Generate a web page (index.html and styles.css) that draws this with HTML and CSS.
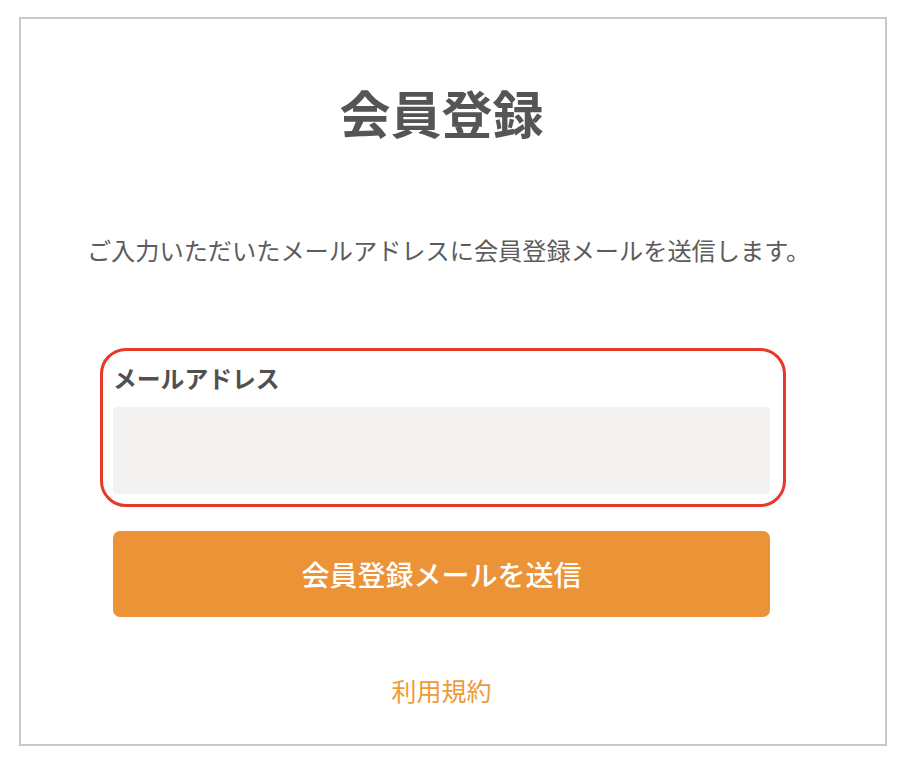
FILE: index.html
```html
<!DOCTYPE html>
<html lang="ja">
<head>
<meta charset="utf-8">
<title>会員登録</title>
<link rel="stylesheet" href="styles.css">
</head>
<body>
<div class="card">
  <h1 class="title">会員登録</h1>
  <p class="lead">ご入力いただいたメールアドレスに会員登録メールを送信します。</p>
  <div class="field">
    <label class="label" for="email">メールアドレス</label>
    <input class="input" id="email" type="email">
    <div class="highlight"></div>
  </div>
  <button class="submit" type="button">会員登録メールを送信</button>
  <a class="terms" href="#">利用規約</a>
</div>
</body>
</html>
```
FILE: styles.css
```css
html, body {
  margin: 0;
  padding: 0;
  background: #fff;
}
body {
  font-family: "Noto Sans CJK JP", "Noto Sans", sans-serif;
  color: #555;
}
.card {
  box-sizing: border-box;
  width: 868px;
  height: 729px;
  margin: 17px 0 0 19px;
  border: 2px solid #c9c9c9;
  display: flex;
  flex-direction: column;
  padding: 63px 115px 0 92px;
}
.title {
  margin: 0;
  font-size: 51px;
  line-height: 60px;
  font-weight: 700;
  text-align: center;
  color: #555;
}
.lead {
  margin: 91px -47px 0 -33px;
  font-size: 24.2px;
  line-height: 34px;
  text-align: center;
  color: #5c5c5c;
  white-space: nowrap;
}
.field {
  position: relative;
  margin-top: 94px;
  display: flex;
  flex-direction: column;
}
.label {
  font-size: 23.8px;
  line-height: 34px;
  font-weight: 700;
  color: #505050;
}
.input {
  margin-top: 12px;
  height: 87px;
  box-sizing: border-box;
  border: none;
  border-radius: 4px;
  background: #f3f2f1;
  outline: none;
}
.highlight {
  position: absolute;
  left: -13px;
  right: -16px;
  top: -13px;
  bottom: -13px;
  border: 3px solid #e8382a;
  border-radius: 26px;
  pointer-events: none;
}
.submit {
  margin-top: 37px;
  height: 86px;
  border: none;
  border-radius: 7px;
  background: #eb9336;
  color: #fff;
  font-family: inherit;
  font-size: 28px;
  font-weight: 500;
  cursor: pointer;
}
.terms {
  margin-top: 56px;
  align-self: center;
  font-size: 25px;
  line-height: 34px;
  color: #ee9a3a;
  text-decoration: none;
}
```
